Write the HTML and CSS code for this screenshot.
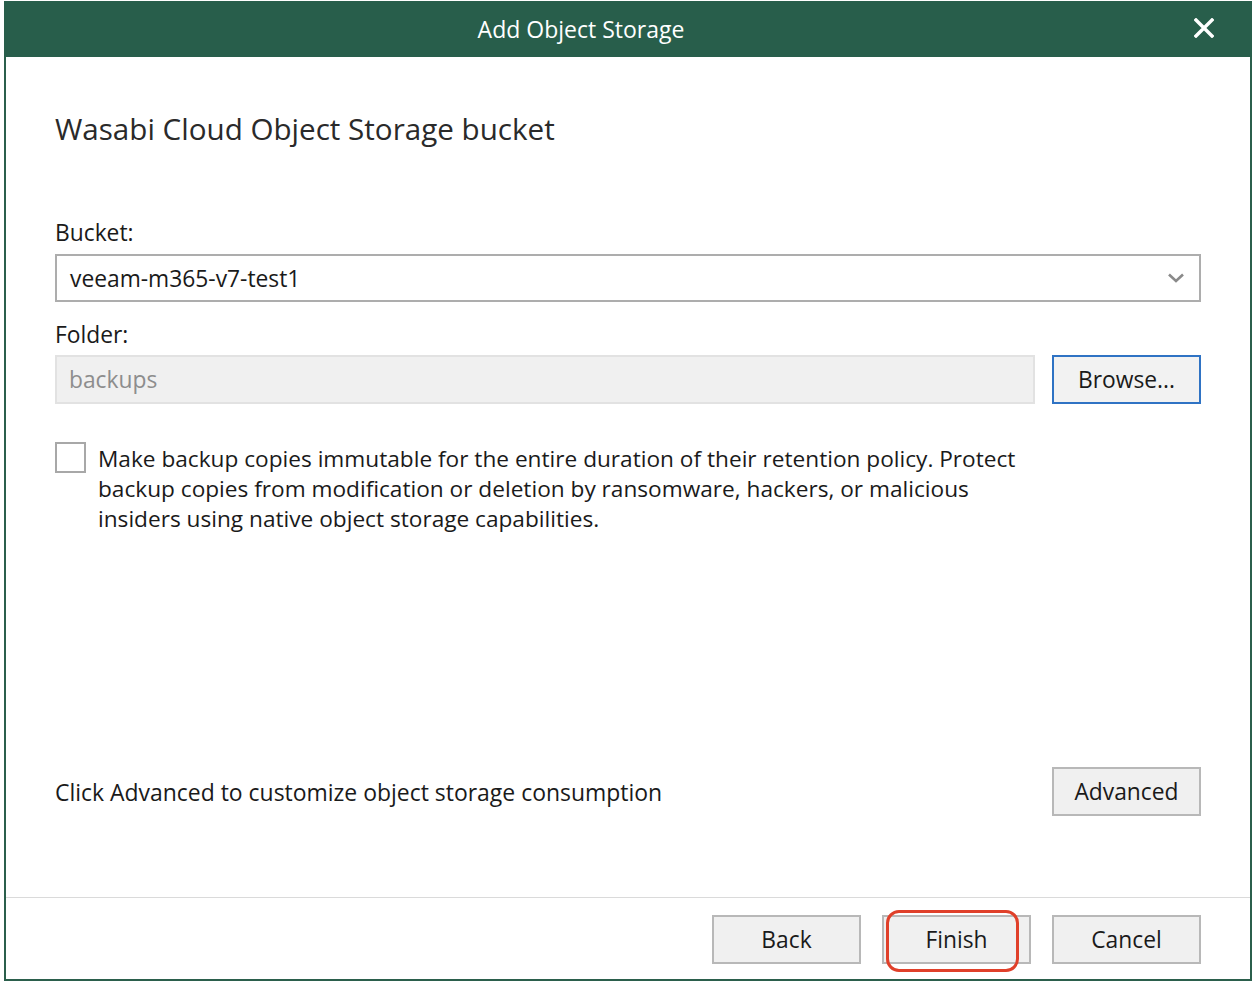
FILE: index.html
```html
<!DOCTYPE html>
<html lang="en">
<head>
<meta charset="utf-8">
<title>Add Object Storage</title>
<link rel="stylesheet" href="styles.css">
</head>
<body>
<div class="dialog">
  <div class="titlebar">
    <div class="title">Add Object Storage</div>
    <div class="close" aria-label="Close">
      <svg width="20" height="20" viewBox="0 0 20 20"><path d="M2 2 L18 18 M18 2 L2 18" stroke="#fff" stroke-width="3.4" stroke-linecap="square" fill="none"/></svg>
    </div>
  </div>
  <div class="content">
    <h1 class="heading">Wasabi Cloud Object Storage bucket</h1>
    <div class="label label-bucket">Bucket:</div>
    <div class="combo">
      <span class="combo-value">veeam-m365-v7-test1</span>
      <svg class="chevron" width="18" height="12" viewBox="0 0 18 12"><path d="M2 2.5 L9 9 L16 2.5" stroke="#8a8a8a" stroke-width="2.6" fill="none"/></svg>
    </div>
    <div class="label label-folder">Folder:</div>
    <div class="folder-row">
      <div class="input disabled">backups</div>
      <div class="btn btn-focus">Browse...</div>
    </div>
    <div class="check-row">
      <span class="checkbox"></span>
      <p class="check-text">Make backup copies immutable for the entire duration of their retention policy. Protect<br>backup copies from modification or deletion by ransomware, hackers, or malicious<br>insiders using native object storage capabilities.</p>
    </div>
    <div class="advanced-row">
      <span class="advanced-text">Click Advanced to customize object storage consumption</span>
      <div class="btn">Advanced</div>
    </div>
  </div>
  <div class="footer">
    <div class="btn">Back</div>
    <div class="btn btn-finish">Finish<span class="highlight"></span></div>
    <div class="btn">Cancel</div>
  </div>
</div>
</body>
</html>
```
FILE: styles.css
```css
html, body {
  margin: 0;
  padding: 0;
  background: #ffffff;
}
body {
  font-family: "Open Sans", "Noto Sans", "DejaVu Sans", sans-serif;
  color: #1a1a1a;
}
.dialog {
  box-sizing: border-box;
  width: 1248px;
  height: 980px;
  margin: 1px 0 0 4px;
  border: 2px solid #2b5f4c;
  border-top: none;
  display: flex;
  flex-direction: column;
  background: #fff;
}
.titlebar {
  height: 56px;
  margin: 0 -2px;
  background: #285e4b;
  color: #fff;
  display: flex;
  align-items: center;
  flex: none;
}
.title {
  flex: 1;
  text-align: center;
  font-size: 23px;
  padding-left: 2px;
}
.close {
  width: 96px;
  display: flex;
  justify-content: center;
  align-items: center;
  height: 100%;
  padding-bottom: 2px;
  box-sizing: border-box;
}
.content {
  flex: 1;
  display: flex;
  flex-direction: column;
  padding: 0 49px 81px 49px;
}
.heading {
  margin: 52px 0 0 0;
  font-size: 29.6px;
  font-weight: 400;
  line-height: 40px;
  color: #2a2a2a;
}
.label {
  font-size: 22.8px;
  line-height: 30px;
}
.label-bucket { margin-top: 69px; }
.label-folder { margin-top: 18px; }
.combo {
  box-sizing: border-box;
  margin-top: 6px;
  height: 48px;
  border: 2px solid #adadad;
  display: flex;
  align-items: center;
  justify-content: space-between;
  padding: 0 14px 0 13px;
  font-size: 22.8px;
}
.chevron { display: block; }
.folder-row {
  margin-top: 5px;
  display: flex;
  gap: 17px;
  height: 49px;
}
.input {
  box-sizing: border-box;
  flex: 1;
  display: flex;
  align-items: center;
  padding-left: 12px;
  font-size: 22.8px;
}
.input.disabled {
  background: #f0f0f0;
  border: 2px solid #e2e2e2;
  color: #8d8d8d;
}
.btn {
  box-sizing: border-box;
  width: 149px;
  height: 49px;
  border: 2px solid #b8b8b8;
  background: #f0f0f0;
  display: flex;
  align-items: center;
  justify-content: center;
  font-size: 22.8px;
  flex: none;
}
.btn-focus {
  border-color: #2f73c4;
  background: #f2f2f2;
}
.check-row {
  margin-top: 38px;
  display: flex;
  align-items: flex-start;
  gap: 12px;
}
.checkbox {
  box-sizing: border-box;
  width: 31px;
  height: 31px;
  border: 2px solid #a8a8a8;
  background: #fff;
  flex: none;
}
.check-text {
  margin: 2px 0 0 0;
  font-size: 22.65px;
  line-height: 30px;
}
.advanced-row {
  margin-top: auto;
  display: flex;
  align-items: center;
  justify-content: space-between;
}
.advanced-text {
  font-size: 22.95px;
}
.footer {
  flex: none;
  border-top: 1px solid #dadada;
  height: 82px;
  box-sizing: border-box;
  padding: 17px 49px 0 0;
  display: flex;
  justify-content: flex-end;
  align-items: flex-start;
  gap: 21px;
}
.btn-finish {
  position: relative;
}
.highlight {
  position: absolute;
  left: 2px;
  top: -7px;
  width: 133px;
  height: 62px;
  box-sizing: border-box;
  border: 3px solid #e0402a;
  border-radius: 13px;
}
```
